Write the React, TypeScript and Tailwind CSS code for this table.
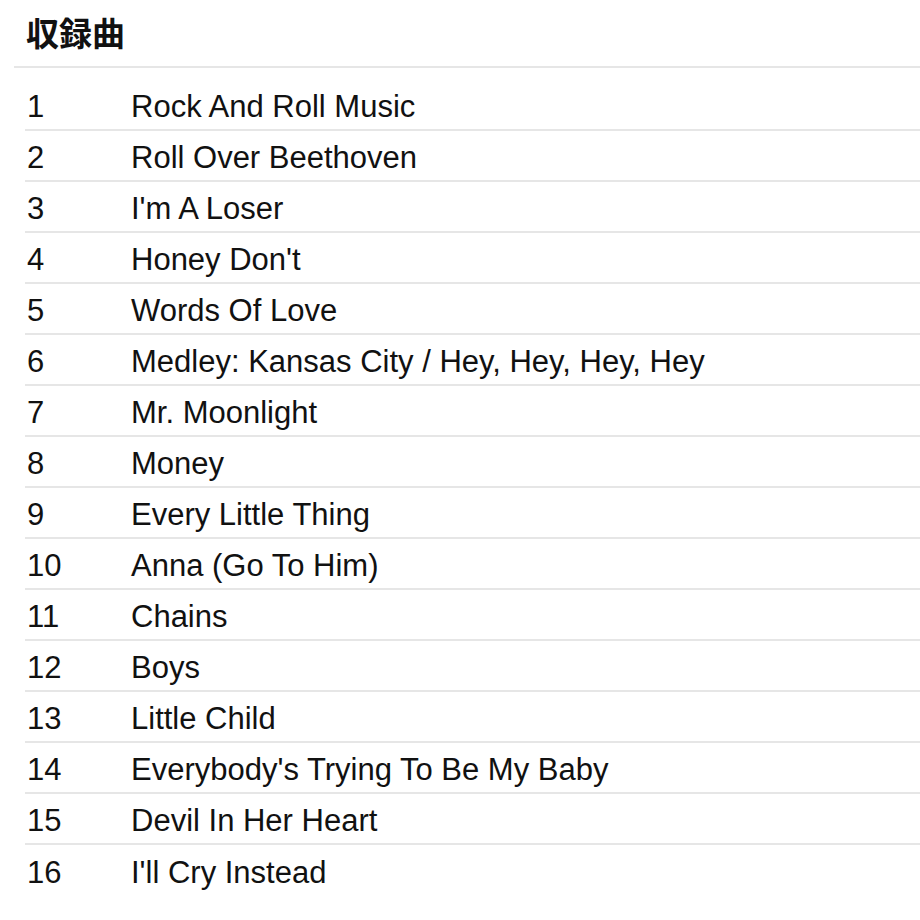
const tracks = [
  "Rock And Roll Music",
  "Roll Over Beethoven",
  "I'm A Loser",
  "Honey Don't",
  "Words Of Love",
  "Medley: Kansas City / Hey, Hey, Hey, Hey",
  "Mr. Moonlight",
  "Money",
  "Every Little Thing",
  "Anna (Go To Him)",
  "Chains",
  "Boys",
  "Little Child",
  "Everybody's Trying To Be My Baby",
  "Devil In Her Heart",
  "I'll Cry Instead",
];

export default function App() {
  return (
    <div className="min-h-[920px] overflow-hidden bg-white pl-[14px] font-['Liberation_Sans','Noto_Sans_CJK_JP',sans-serif] text-[#111]">
      <h2 className="flex h-[66px] items-center pl-3 pt-1 text-[33px] font-bold">
        収録曲
      </h2>
      <div className="h-[2px] bg-[#e6e6e6]" />
      <ol className="ml-[11px] mt-[12px]">
        {tracks.map((title, i) => (
          <li
            key={title}
            className={`flex h-[51px] items-center pt-[6px] text-[31px] ${
              i < tracks.length - 1 ? "border-b-2 border-[#e6e6e6]" : ""
            }`}
          >
            <span className="w-[106px] pl-[2px]">{i + 1}</span>
            <span>{title}</span>
          </li>
        ))}
      </ol>
    </div>
  );
}
